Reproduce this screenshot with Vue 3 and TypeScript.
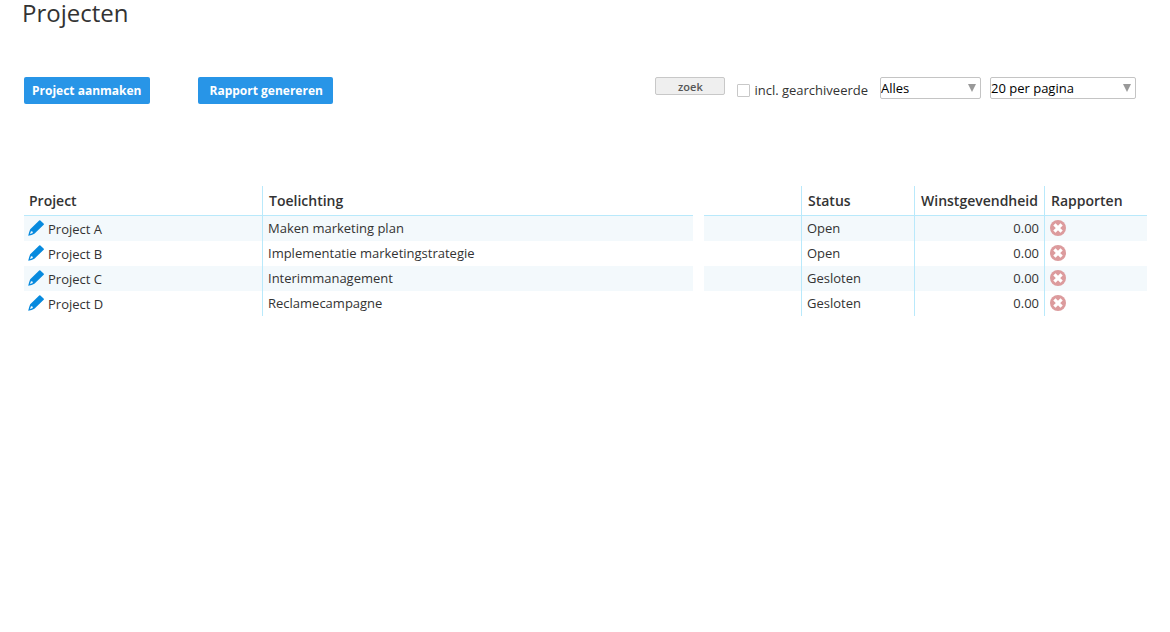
<script setup lang="ts">
import { ref } from 'vue'

interface Project {
  name: string
  description: string
  status: string
  profit: string
}

const projects: Project[] = [
  { name: 'Project A', description: 'Maken marketing plan', status: 'Open', profit: '0.00' },
  { name: 'Project B', description: 'Implementatie marketingstrategie', status: 'Open', profit: '0.00' },
  { name: 'Project C', description: 'Interimmanagement', status: 'Gesloten', profit: '0.00' },
  { name: 'Project D', description: 'Reclamecampagne', status: 'Gesloten', profit: '0.00' },
]

const archived = ref(false)
const filter = ref('Alles')
const pageSize = ref('20 per pagina')
</script>

<template>
  <main class="page">
    <h1>Projecten</h1>

    <div class="toolbar">
      <button type="button" class="primary">Project aanmaken</button>
      <button type="button" class="primary report">Rapport genereren</button>

      <form class="filters" @submit.prevent>
        <button type="submit" class="search">zoek</button>
        <label class="archived">
          <input v-model="archived" type="checkbox" />
          <span>incl. gearchiveerde</span>
        </label>
        <span class="select status-select">
          <select v-model="filter" aria-label="Status">
            <option>Alles</option>
          </select>
          <svg viewBox="0 0 8 8" aria-hidden="true"><path d="M0 0H8L4 8Z" /></svg>
        </span>
        <span class="select size-select">
          <select v-model="pageSize" aria-label="Aantal per pagina">
            <option>20 per pagina</option>
          </select>
          <svg viewBox="0 0 8 8" aria-hidden="true"><path d="M0 0H8L4 8Z" /></svg>
        </span>
      </form>
    </div>

    <table>
      <colgroup>
        <col class="c-project" />
        <col />
        <col class="c-gap" />
        <col class="c-extra" />
        <col class="c-status" />
        <col class="c-profit" />
        <col class="c-reports" />
      </colgroup>
      <thead>
        <tr>
          <th scope="col">Project</th>
          <th scope="col" class="line">Toelichting</th>
          <td class="gap"></td>
          <td></td>
          <th scope="col" class="line">Status</th>
          <th scope="col" class="line">Winstgevendheid</th>
          <th scope="col" class="line">Rapporten</th>
        </tr>
      </thead>
      <tbody>
        <tr v-for="project in projects" :key="project.name">
          <td>
            <a href="#" class="project">
              <svg class="pencil" viewBox="0 0 16 16" aria-hidden="true">
                <path
                  fill-rule="evenodd"
                  d="M11.2.4Q11.8-.1 12.4.4L15.8 3.7Q16.2 4.2 15.7 4.7L6.4 13.7Q4 15.2 .2 15.8Q.9 12.4 2.2 9.3ZM3 11.3 2 14.1 4.8 13.1 4.5 11.6Z"
                />
              </svg>
              <span>{{ project.name }}</span>
            </a>
          </td>
          <td class="line">{{ project.description }}</td>
          <td class="gap"></td>
          <td></td>
          <td class="line">{{ project.status }}</td>
          <td class="line number">{{ project.profit }}</td>
          <td class="line">
            <button type="button" class="remove" aria-label="Rapport verwijderen">
              <svg viewBox="0 0 16 16" aria-hidden="true">
                <circle cx="8" cy="8" r="8" fill="#dc9b9d" />
                <path d="M4.4 4.4 11.6 11.6M11.6 4.4 4.4 11.6" stroke="#fff" stroke-width="3.2" />
              </svg>
            </button>
          </td>
        </tr>
      </tbody>
    </table>
  </main>
</template>

<style>
body {
  margin: 0;
  background: #fff;
}
</style>

<style scoped>
.page {
  padding: 0 23px 0 24px;
  color: #333;
  font: 13px/18px 'Open Sans', 'Noto Sans', sans-serif;
}

h1 {
  margin: 0 0 0 -2px;
  font-size: 24px;
  font-weight: 400;
  line-height: 26px;
}

.toolbar {
  display: flex;
  align-items: flex-start;
  margin-top: 51px;
}

button,
select {
  margin: 0;
  font-family: inherit;
}

.primary {
  height: 27px;
  padding: 0 8px;
  border: 0;
  border-radius: 2px;
  background: #2895e7;
  color: #fff;
  font-size: 12px;
  font-weight: 700;
  line-height: 27px;
  white-space: nowrap;
}

.report {
  margin-left: 48px;
  padding: 0 10px 0 12px;
}

.filters {
  display: flex;
  align-items: flex-start;
  margin: 0 11px 0 auto;
}

.search {
  width: 70px;
  height: 18px;
  padding: 0;
  border: 1px solid #c8c8c8;
  border-radius: 2px;
  background: #efefef;
  color: #555;
  font-size: 11px;
  font-weight: 600;
  line-height: 18px;
}

.archived {
  display: flex;
  align-items: center;
  gap: 4px;
  height: 26px;
  margin: 0 12px;
  white-space: nowrap;
}

.archived input {
  appearance: none;
  width: 13px;
  height: 13px;
  margin: 0;
  border: 1px solid #c8c8c8;
  border-radius: 1px;
  background: #fff;
}

.archived input:checked {
  background: #2895e7;
}

.select {
  position: relative;
  height: 22px;
}

.status-select {
  width: 101px;
  margin-right: 9px;
}

.size-select {
  width: 146px;
}

.select select {
  appearance: none;
  display: block;
  width: 100%;
  height: 22px;
  padding: 0 16px 0 0;
  border: 1px solid #c4c4c4;
  border-radius: 2px;
  background: #fff;
  color: #000;
  font-size: 13px;
  line-height: 20px;
}

.select svg {
  position: absolute;
  top: 7px;
  right: 5px;
  width: 8px;
  height: 8px;
  fill: #999;
  pointer-events: none;
}

table {
  width: 100%;
  margin-top: 82px;
  border-spacing: 0;
  table-layout: fixed;
}

.c-project {
  width: 238px;
}

.c-gap {
  width: 11px;
}

.c-extra {
  width: 97px;
}

.c-status {
  width: 113px;
}

.c-profit {
  width: 130px;
}

.c-reports {
  width: 103px;
}

th,
td {
  box-sizing: border-box;
  height: 25px;
  padding: 0 5px;
  text-align: left;
  white-space: nowrap;
}

td {
  padding-bottom: 2px;
}

thead th,
thead td {
  height: 30px;
  border-bottom: 1px solid #b9e9fb;
}

th {
  font-size: 14px;
  font-weight: 600;
}

.line {
  border-left: 1px solid #b9e9fb;
}

th.line {
  padding-left: 6px;
}

tbody tr:nth-child(odd) {
  background: #f3f9fc;
}

tbody td:first-child {
  padding-left: 4px;
}

td.gap {
  padding: 0;
  border: 0;
  background: #fff;
}

.number {
  text-align: right;
}

.project {
  display: flex;
  align-items: center;
  gap: 4px;
  color: inherit;
  text-decoration: none;
}

.pencil {
  width: 16px;
  height: 16px;
  fill: #078ade;
}

.project span {
  padding-top: 2px;
}

.remove {
  display: block;
  width: 16px;
  height: 16px;
  padding: 0;
  border: 0;
  background: none;
}

.remove svg {
  display: block;
}
</style>
